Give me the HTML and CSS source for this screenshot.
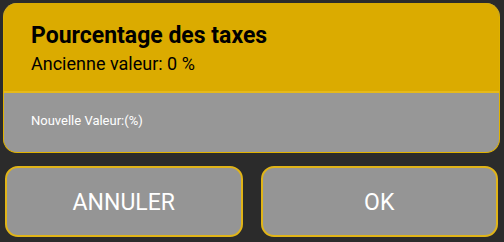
FILE: index.html
```html
<!DOCTYPE html>
<html lang="fr">
<head>
  <meta charset="UTF-8">
  <title>Pourcentage des taxes</title>
  <link rel="stylesheet" href="styles.css">
</head>
<body>
  <div class="dialog">
    <div class="card">
      <div class="card-head">
        <h1>Pourcentage des taxes</h1>
        <p>Ancienne valeur: 0 %</p>
      </div>
      <div class="card-body">
        <label>Nouvelle Valeur:(%)</label>
      </div>
    </div>
    <div class="actions">
      <button type="button">ANNULER</button>
      <button type="button">OK</button>
    </div>
  </div>
</body>
</html>
```

FILE: styles.css
```css
body {
  margin: 0;
  background: #2b2b2b;
  font-family: Roboto, 'Liberation Sans', sans-serif;
  width: 504px;
  height: 242px;
  overflow: hidden;
}

.dialog {
  padding: 3px 4px 0 3px;
}

.card {
  border-radius: 14px;
  overflow: hidden;
  background: #979797;
  border: 1px solid #e0b200;
  border-top: none;
}

.card-head {
  background: #dbab00;
  height: 90px;
  box-sizing: border-box;
  padding: 20px 0 0 27px;
  border-bottom: 2px solid #e6b918;
}

.card-head h1 {
  margin: 0;
  font-size: 23px;
  font-weight: 700;
  color: #000;
  line-height: 26px;
}

.card-head p {
  margin: 4px 0 0;
  font-size: 18px;
  color: #000;
  line-height: 22px;
}

.card-body {
  height: 59px;
  box-sizing: border-box;
  padding: 17px 0 0 27px;
}

.card-body label {
  font-size: 13px;
  color: #fff;
}

.actions {
  display: flex;
  gap: 18px;
  margin-top: 13px;
  padding: 0 2px 0 2px;
}

.actions button {
  flex: 1;
  height: 71px;
  background: #959595;
  border: 2px solid #e0b418;
  border-radius: 13px;
  color: #fff;
  font-family: inherit;
  font-size: 23px;
  padding-top: 2px;
}
```
